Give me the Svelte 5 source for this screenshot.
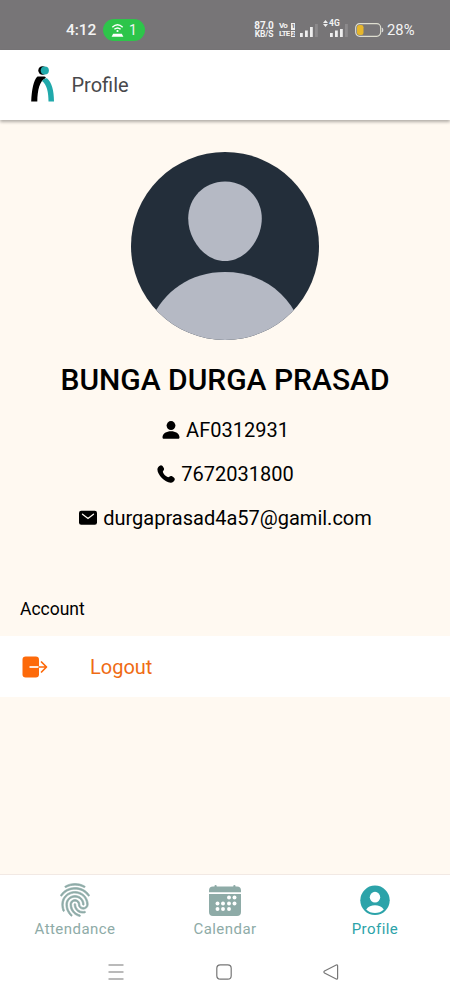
<script lang="ts">
	let name = 'BUNGA DURGA PRASAD';
	let details = [
		{ icon: 'person', value: 'AF0312931' },
		{ icon: 'call', value: '7672031800' },
		{ icon: 'mail', value: 'durgaprasad4a57@gamil.com' }
	];
	let tabs = ['Attendance', 'Calendar', 'Profile'];
	let active = $state('Profile');
	let dots = [[20, 14.5], [25.5, 14.5], [8.5, 20.5], [14, 20.5], [20, 20.5], [25.5, 20.5], [8.5, 26], [14, 26], [20, 26]];
</script>

<div class="screen">
	<div class="status">
		<span class="time">4:12</span>
		<span class="hotspot">
			<svg width="13" height="15" viewBox="0 0 13 15" fill="none" stroke="#fff" stroke-width="1.4">
				<path d="M1.3 4.2Q6.5-.8 11.7 4.2M3.4 6.3Q6.5 3.5 9.6 6.3" />
				<circle cx="6.5" cy="8" r="1.1" fill="#fff" stroke="none" />
				<path d="M2.2 10.8h8.6l1.6 2.9H.6z" fill="#fff" stroke="none" />
			</svg>
			<span>1</span>
		</span>
		<span class="speed"><span class="rate">87.0</span><br />KB/S</span>
		<span class="volte"><span>Vo<b>1</b></span><span>LTE<b>2</b></span></span>
		<svg class="signal" width="18" height="13" viewBox="0 0 18 13" fill="#eee">
			<path d="M0 9h2.8v4H0zM5 6.5h2.8V13H5zM10 3h2.8v10H10z" />
			<path d="M15 0h2.8v13H15z" opacity=".18" />
		</svg>
		<span class="mobile">
			<span class="net">
				<svg width="5" height="7" viewBox="0 0 5 7" fill="#eee"><path d="M0 3 2.5 0 5 3zM0 4l2.5 3L5 4z" /></svg>4G
			</span>
			<svg width="18" height="13" viewBox="0 0 18 13" fill="#eee">
				<path d="M0 9h2.8v4H0zM5 6.5h2.8V13H5zM10 5h2.8v8H10z" />
				<path d="M15 0h2.8v13H15z" opacity=".18" />
			</svg>
		</span>
		<svg class="battery" width="29" height="14" viewBox="0 0 29 14">
			<rect x=".7" y=".7" width="25" height="12.6" rx="4" fill="none" stroke="#deded0" stroke-width="1.2" />
			<rect x="2" y="2" width="6.5" height="10" rx="2.2" fill="#e6b62b" />
			<path d="M27 5q1.5 2 0 4" fill="none" stroke="#ddd" stroke-width="1.2" />
		</svg>
		<span class="percent">28%</span>
	</div>

	<header>
		<svg width="24" height="36" viewBox="0 0 24 36">
			<circle cx="11.5" cy="4.5" r="4.2" fill="#000" />
			<circle cx="13.8" cy="4.5" r="4.1" fill="#20a9ab" />
			<path d="M6.5 10.5h6.7q2 0 1.500 1.500C8.500 15 6.500 24 6.300 35.500H.2C.7 24 2.500 14 6.500 10.500z" />
			<path d="M11 15q2.200-3 5-2.700c4.700 4 7 12 7 23.200h-5.500c0-9-1.500-17-6.500-20.500z" fill="#20a9ab" />
		</svg>
		<h1>Profile</h1>
	</header>

	<main>
		<svg class="avatar" width="188" height="188" viewBox="0 0 188 188">
			<clipPath id="round"><circle cx="94" cy="94" r="94" /></clipPath>
			<g clip-path="url(#round)">
				<path d="M0 0h188v188H0z" fill="#232e3a" />
				<path d="M94 29.500c21 0 36.800 16.500 36.800 37S115 109 94 109 57.200 87 57.200 66.500 73 29.500 94 29.500z" fill="#b5b9c4" />
				<path d="M20 188v-20C33 139 59 120 94 120s61 19 74 48v20z" fill="#b5b9c4" />
			</g>
		</svg>
		<h2>{name}</h2>
		{#each details as item}
			<div class="detail">
				{#if item.icon === 'person'}
					<svg width="18" height="18" viewBox="0 0 18 18">
						<ellipse cx="9" cy="4.600" rx="4.400" ry="4.500" />
						<path d="M9 10.200c4.500 0 8.500 2.300 8.500 6 0 1-.6 1.500-1.500 1.500H2c-.9 0-1.500-.5-1.500-1.500 0-3.700 4-6 8.500-6z" />
					</svg>
				{:else if item.icon === 'call'}
					<svg width="18" height="18" viewBox="0 0 18 18">
						<path d="M3.500.4C4.800 0 6 1.500 6.800 3c.6 1.200.2 2-.5 2.800-.6.7-.5 1.200 0 2.200.9 1.600 2.200 2.900 3.800 3.800 1 .6 1.500.5 2.200-.1.900-.7 1.700-1 2.800-.4 1.500.8 2.900 2 2.700 3.200-.4 1.700-2.300 3.300-4.100 3.200C7.700 17.300.6 10 .4 4.500.3 2.700 1.900.8 3.500.4z" />
					</svg>
				{:else}
					<svg width="18" height="16" viewBox="0 0 18 16">
						<rect y=".7" width="18" height="14" rx="2.200" />
						<path d="m3.500 4.200 5.500 4.200 5.500-4.200" fill="none" stroke="#fff9f1" stroke-width="1.300" stroke-linecap="round" />
					</svg>
				{/if}
				<span>{item.value}</span>
			</div>
		{/each}

		<section>
			<h3>Account</h3>
			<button class="logout">
				<svg width="26" height="22" viewBox="0 0 26 22">
					<rect x=".5" y=".5" width="16.500" height="21" rx="3.200" fill="#fd6a0a" />
					<path d="M7.500 11H17" stroke="#fff" stroke-width="1.700" />
					<path d="M17 11h7M19.500 6l5 5-5 5" fill="none" stroke="#fd6a0a" stroke-width="1.700" stroke-linecap="round" stroke-linejoin="round" />
				</svg>
				<span>Logout</span>
			</button>
		</section>
	</main>

	<nav>
		{#each tabs as tab}
			<button class="tab" class:active={active === tab} onclick={() => (active = tab)}>
				{#if tab === 'Attendance'}
					<svg width="30" height="34" viewBox="2.700 1.700 18.600 20.600" preserveAspectRatio="none" fill="currentColor" stroke="currentColor" stroke-width=".4">
						<path d="M17.810 4.470c-.08 0-.16-.02-.23-.06C15.660 3.420 14 3 12.010 3c-1.980 0-3.860.47-5.570 1.410-.24.13-.54.04-.68-.2-.13-.24-.04-.55.2-.68C7.820 2.520 9.860 2 12.010 2c2.130 0 3.990.47 6.030 1.520.25.13.34.43.21.67-.09.18-.26.28-.44.28z" />
						<path d="M3.500 9.720c-.1 0-.2-.03-.29-.09-.23-.16-.28-.47-.12-.7.99-1.400 2.250-2.500 3.750-3.270C9.980 4.040 14 4.030 17.150 5.650c1.500.77 2.760 1.860 3.750 3.250.16.22.11.54-.12.7-.23.16-.54.11-.7-.12-.9-1.260-2.040-2.250-3.390-2.940-2.870-1.470-6.540-1.470-9.400.01-1.360.7-2.500 1.700-3.400 2.960-.08.14-.23.21-.39.21z" />
						<path d="M9.750 21.790c-.13 0-.26-.05-.35-.15-.87-.87-1.340-1.430-2.010-2.640-.69-1.230-1.050-2.730-1.050-4.340 0-2.970 2.540-5.390 5.660-5.390s5.660 2.420 5.660 5.390c0 .28-.22.5-.5.5s-.5-.22-.5-.5c0-2.420-2.090-4.390-4.660-4.390-2.570 0-4.660 1.970-4.660 4.390 0 1.440.32 2.770.93 3.850.64 1.150 1.080 1.640 1.850 2.420.19.2.19.51 0 .71-.11.1-.24.15-.37.15z" />
						<path d="M16.920 19.940c-1.190 0-2.240-.3-3.100-.89-1.490-1.010-2.380-2.650-2.380-4.390 0-.28.22-.5.5-.5s.5.22.5.5c0 1.410.72 2.740 1.940 3.560.71.48 1.540.71 2.540.71.24 0 .64-.03 1.040-.1.27-.05.53.13.58.41.05.27-.13.53-.41.58-.57.11-1.070.12-1.210.12z" />
						<path d="M14.910 22c-.04 0-.09-.01-.13-.02-1.590-.44-2.630-1.030-3.720-2.100-1.400-1.390-2.170-3.240-2.170-5.220 0-1.620 1.380-2.940 3.080-2.940s3.080 1.320 3.080 2.940c0 1.070.93 1.940 2.080 1.940s2.080-.87 2.080-1.940c0-3.770-3.250-6.830-7.250-6.830-2.840 0-5.440 1.580-6.610 4.030-.39.81-.59 1.760-.59 2.800 0 .78.07 2.010.67 3.610.1.26-.03.55-.29.64-.26.1-.55-.04-.64-.29-.49-1.310-.73-2.610-.73-3.960 0-1.200.23-2.290.68-3.240 1.330-2.790 4.280-4.600 7.510-4.600 4.550 0 8.250 3.510 8.250 7.830 0 1.620-1.380 2.940-3.080 2.940s-3.080-1.320-3.080-2.940c0-1.070-.93-1.940-2.080-1.940s-2.080.87-2.080 1.940c0 1.710.66 3.310 1.870 4.510.95.94 1.860 1.460 3.270 1.850.27.07.42.35.35.61-.05.23-.26.38-.47.38z" />
					</svg>
				{:else if tab === 'Calendar'}
					<svg width="32" height="34" viewBox="0 0 32 34" fill="currentColor">
						<path d="M0 9.200V7.500q0-4 4-4h1.500V3a1 1 0 0 1 2.200 0v.5h16.600V3a1 1 0 0 1 2.200 0v.5H28q4 0 4 4v1.700zM0 11h32v18q0 4-4 4H4q-4 0-4-4z" />
						{#each dots as [x, y]}
							<circle cx={x} cy={y} r="1.950" fill="#fff" />
						{/each}
					</svg>
				{:else}
					<svg width="30" height="34" viewBox="0 0 30 34" fill="#fff">
						<circle cx="15" cy="17.300" r="14.700" fill="currentColor" />
						<ellipse cx="15" cy="14.200" rx="5.200" ry="5.400" />
						<path d="M6.200 26.500c2-3 5.300-4.200 8.800-4.200s6.800 1.200 8.800 4.200c-2.300 2.400-5.500 3.500-8.800 3.500s-6.500-1.100-8.800-3.500z" />
					</svg>
				{/if}
				<span>{tab}</span>
			</button>
		{/each}
	</nav>

	<footer>
		<svg width="16" height="16" viewBox="0 0 16 16"><path d="M.5 1h15M.5 8h15M.5 15h15" /></svg>
		<svg width="16" height="16" viewBox="0 0 16 16"><rect x=".8" y=".8" width="14.400" height="14.400" rx="3.500" /></svg>
		<svg width="16" height="16" viewBox="0 0 16 16"><path d="M1.500 7 13.200 1q1.400-.4 1.400 1v12q0 1.400-1.400 1L1.500 9q-1.200-1 0-2z" /></svg>
	</footer>
</div>

<style>
	:global(body) {
		margin: 0;
		background: #fff;
	}
	.screen {
		width: 450px;
		height: 1000px;
		display: flex;
		flex-direction: column;
		overflow: hidden;
		background: #fff9f1;
		font-family: Roboto, 'Liberation Sans', sans-serif;
		color: #000;
	}
	svg {
		flex: none;
		display: block;
	}
	h1, h2, h3 {
		margin: 0;
		font-weight: 400;
	}
	button {
		border: 0;
		padding: 0;
		background: #fff;
		font: inherit;
		cursor: pointer;
	}
	.status {
		box-sizing: border-box;
		height: 50px;
		flex: none;
		display: flex;
		align-items: center;
		padding: 10px 0 0 66px;
		background: #777577;
		color: #f3f3f3;
		white-space: nowrap;
	}
	.time {
		width: 37px;
		font-size: 15.5px;
		font-weight: 500;
		letter-spacing: -0.1px;
	}
	.hotspot {
		display: flex;
		align-items: center;
		justify-content: center;
		gap: 5px;
		width: 42px;
		height: 22px;
		border-radius: 11px;
		background: #2dc54a;
		font-size: 14px;
	}
	.speed {
		width: 20px;
		margin-left: 109px;
		font-size: 8.5px;
		font-weight: 700;
		line-height: 8px;
		text-align: center;
		letter-spacing: -0.2px;
	}
	.rate {
		font-size: 10px;
	}
	.volte {
		display: flex;
		flex-direction: column;
		gap: 1px;
		width: 16px;
		margin-left: 5px;
		font-size: 8px;
		font-weight: 700;
		line-height: 6.5px;
		letter-spacing: -0.8px;
	}
	.volte span {
		display: flex;
		justify-content: space-between;
	}
	.volte b {
		width: 4.5px;
		background: #eee;
		color: #777577;
		font-size: 6px;
		text-align: center;
	}
	.signal {
		margin-left: 5px;
	}
	.mobile {
		display: flex;
		flex-direction: column;
		align-items: flex-end;
		width: 25px;
		margin-left: 5px;
		margin-top: -3px;
	}
	.mobile > svg {
		margin-top: -3px;
	}
	.net {
		display: flex;
		align-self: flex-start;
		gap: 1px;
		font-size: 8.5px;
		line-height: 7px;
		font-weight: 700;
	}
	.battery {
		margin-left: 7px;
	}
	.percent {
		margin-left: 3px;
		font-size: 14.8px;
	}
	header {
		height: 70px;
		flex: none;
		display: flex;
		align-items: center;
		gap: 16.5px;
		padding-left: 31px;
		background: #fff;
		box-shadow: 0 2px 3px rgba(0, 0, 0, 0.3);
	}
	header svg {
		margin-top: -3px;
	}
	h1 {
		font-size: 20px;
		color: #48484b;
	}
	main {
		flex: 1;
		display: flex;
		flex-direction: column;
		align-items: center;
		padding-top: 32px;
	}
	h2 {
		margin: 20px 0 13px;
		font-size: 30px;
		line-height: 40px;
		font-weight: 500;
		white-space: nowrap;
	}
	.detail {
		display: flex;
		align-items: center;
		gap: 6px;
		height: 44px;
		font-size: 20px;
		margin: -5px 0 5px 1px;
	}
	section {
		width: 100%;
		margin-top: 49px;
	}
	h3 {
		height: 42px;
		padding-left: 20px;
		font-size: 17.5px;
		line-height: 30px;
	}
	.logout {
		display: flex;
		align-items: center;
		gap: 42px;
		width: 100%;
		height: 61px;
		padding-left: 22px;
		color: #ef6b14;
		font-size: 20px;
	}
	nav {
		display: flex;
		box-sizing: border-box;
		height: 70px;
		border-top: 1px solid #f2e9e4;
		background: #fff;
	}
	.tab {
		flex: 1;
		display: flex;
		flex-direction: column;
		align-items: center;
		padding-top: 8px;
		color: #8eaba7;
		font-size: 15px;
		line-height: 24px;
		letter-spacing: 0.45px;
	}
	.tab.active {
		color: #2ca3a9;
	}
	footer {
		display: flex;
		justify-content: space-between;
		align-items: center;
		height: 56px;
		padding: 0 111px 0 108px;
		background: #fff;
	}
	footer svg {
		fill: none;
		stroke: #777;
		stroke-width: 1.2;
	}
</style>
